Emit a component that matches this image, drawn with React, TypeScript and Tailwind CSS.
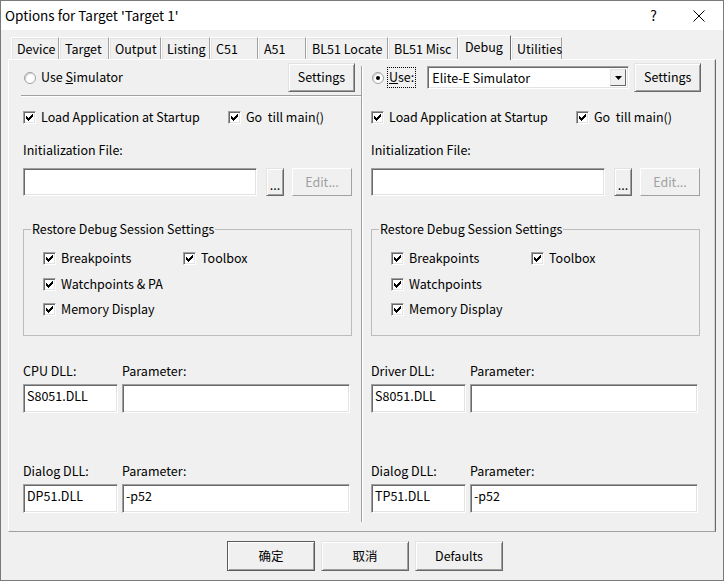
import React from "react";

function Btn({
  children,
  className = "",
  disabled = false,
  strong = false,
}: {
  children: React.ReactNode;
  className?: string;
  disabled?: boolean;
  strong?: boolean;
}) {
  const look = disabled
    ? "border-t-white border-l-white border-r-[#a0a0a0] border-b-[#a0a0a0] text-[#a0a0a0]"
    : strong
    ? "border-[#5a5a5a] shadow-[inset_1px_1px_0_#fff,inset_-1px_-1px_0_#a0a0a0]"
    : "border-t-[#e3e3e3] border-l-[#e3e3e3] border-r-[#696969] border-b-[#696969] shadow-[inset_1px_1px_0_#fff,inset_-1px_-1px_0_#a0a0a0]";
  return (
    <div className={`flex shrink-0 items-center justify-center border bg-[#f0f0f0] ${look} ${className}`}>
      {children}
    </div>
  );
}

function Field({ value = "", className = "" }: { value?: string; className?: string }) {
  return (
    <div
      className={`shrink-0 border border-t-[#a0a0a0] border-l-[#a0a0a0] border-r-white border-b-white bg-white pl-[3px] pt-[2px] leading-[18px] shadow-[inset_1px_1px_0_#696969,inset_-1px_-1px_0_#e3e3e3] ${className}`}
    >
      {value}
    </div>
  );
}

function Check() {
  return (
    <span className="flex h-[13px] w-[13px] shrink-0 items-center justify-center border border-t-[#a0a0a0] border-l-[#a0a0a0] border-r-white border-b-white bg-white shadow-[inset_1px_1px_0_#696969,inset_-1px_-1px_0_#e3e3e3]">
      <svg width="7" height="7" viewBox="0 0 7 7" shapeRendering="crispEdges">
        <path d="M0 2h1v1h1v1h1V3h1V2h1V1h1V0h1v3H6v1H5v1H4v1H3v1H2V6H1V5H0z" fill="#000" />
      </svg>
    </span>
  );
}

function CheckItem({ label, className = "" }: { label: string; className?: string }) {
  return (
    <div className={`flex items-center ${className}`}>
      <Check />
      <span className="ml-[5px] whitespace-pre">{label}</span>
    </div>
  );
}

function Radio({ on = false }: { on?: boolean }) {
  return (
    <span className="flex h-[12px] w-[12px] shrink-0 items-center justify-center rounded-full border border-[#a0a0a0] bg-white shadow-[inset_1px_1px_0_#d0d0d0]">
      {on && <span className="h-[4px] w-[4px] rounded-full bg-black" />}
    </span>
  );
}

function DebugColumn({
  top,
  line,
  dllLabel,
  dll,
  dialogDll,
  watch,
  className = "",
}: {
  top: React.ReactNode;
  line: boolean;
  dllLabel: string;
  dll: string;
  dialogDll: string;
  watch: string;
  className?: string;
}) {
  return (
    <div className={`flex w-[352px] shrink-0 flex-col ${className}`}>
      <div className="mt-[3px] flex h-[29px] items-center">{top}</div>
      <div
        className={`mt-[3px] -ml-[2px] h-[2px] border-t ${line ? "border-t-[#a0a0a0] border-b border-b-white" : "border-transparent"}`}
      />
      <div className="mt-[10px] flex h-[20px] items-center">
        <CheckItem label="Load Application at Startup" className="w-[205px]" />
        <CheckItem label="Go  till main()" />
      </div>
      <div className="mt-[14px] h-[18px] leading-[18px]">Initialization File:</div>
      <div className="mt-[9px] flex h-[28px]">
        <Field className="w-[234px]" />
        <Btn className="ml-[9px] w-[18px] items-end pb-[4px] leading-none">...</Btn>
        <Btn disabled className="ml-[8px] w-[60px]">
          Edit...
        </Btn>
      </div>
      <fieldset className="mt-[24px] h-[116px] w-[329px] border border-[#bcbcbc] px-0">
        <legend className="ml-[7px] px-[1px] leading-[18px]">Restore Debug Session Settings</legend>
        <div className="mt-[10px] flex flex-col gap-[6px] pl-[19px]">
          <div className="flex h-[20px] items-center">
            <CheckItem label="Breakpoints" className="w-[140px]" />
            <CheckItem label="Toolbox" />
          </div>
          <CheckItem label={watch} className="h-[20px]" />
          <CheckItem label="Memory Display" className="-mt-[1px] h-[20px]" />
        </div>
      </fieldset>
      <div className="mt-[26px] flex h-[18px] leading-[18px]">
        <span className="w-[99px]">{dllLabel}</span>
        <span>Parameter:</span>
      </div>
      <div className="mt-[4px] flex h-[29px] gap-[4px]">
        <Field value={dll} className="w-[95px]" />
        <Field className="w-[228px]" />
      </div>
      <div className="mt-[49px] flex h-[18px] leading-[18px]">
        <span className="w-[99px]">Dialog DLL:</span>
        <span>Parameter:</span>
      </div>
      <div className="mt-[4px] flex h-[29px] gap-[4px]">
        <Field value={dialogDll} className="w-[95px]" />
        <Field value="-p52" className="w-[228px]" />
      </div>
    </div>
  );
}

const tabs: { name: string; w: string }[] = [
  { name: "Device", w: "w-[48px]" },
  { name: "Target", w: "w-[50px]" },
  { name: "Output", w: "w-[52px]" },
  { name: "Listing", w: "w-[49px]" },
  { name: "C51", w: "w-[48px]" },
  { name: "A51", w: "w-[48px]" },
  { name: "BL51 Locate", w: "w-[82px]" },
  { name: "BL51 Misc", w: "w-[70px]" },
  { name: "Debug", w: "w-[53px]" },
  { name: "Utilities", w: "w-[51px]" },
];

export default function App() {
  return (
    <div className="flex h-[581px] w-[724px] flex-col border border-[#7a7a7a] bg-[#f0f0f0] font-['Noto_Sans_CJK_SC','Noto_Sans',sans-serif] text-[12.5px] text-black">
      {/* title bar */}
      <div className="flex h-[29px] shrink-0 items-center bg-white pl-[4px]">
        <span className="text-[13.5px]">Options for Target 'Target 1'</span>
        <span className="ml-auto mr-[36px] text-[14px]">?</span>
        <svg width="12" height="12" viewBox="0 0 12 12" className="mr-[18px]">
          <path d="M0.5 0.5L11.5 11.5M11.5 0.5L0.5 11.5" stroke="#000" strokeWidth="1" />
        </svg>
      </div>

      {/* tabs */}
      <div className="mt-[5px] flex h-[24px] shrink-0 pl-[10px]">
        {tabs.map((t) =>
          t.name === "Debug" ? (
            <div
              key={t.name}
              className={`relative z-10 -mb-px h-[25px] border-t border-l border-r border-t-white border-l-white border-r-[#696969] bg-[#f0f0f0] pl-[6px] pt-[1px] leading-[20px] ${t.w}`}
            >
              {t.name}
            </div>
          ) : (
            <div
              key={t.name}
              className={`mt-[2px] h-[22px] border-t border-l border-r border-t-white border-l-white border-r-[#a0a0a0] shadow-[inset_1px_1px_0_#e3e3e3] pl-[5px] pt-[1px] leading-[20px] ${t.w}`}
            >
              {t.name}
            </div>
          )
        )}
      </div>

      {/* tab page */}
      <div className="ml-[7px] flex h-[473px] w-[708px] shrink-0 border border-t-white border-l-white border-r-[#696969] border-b-[#a0a0a0] shadow-[inset_-1px_0_0_#d4d4d4]">
        <DebugColumn
          className="pl-[14px]"
          line
          top={
            <>
              <span className="ml-[1px]">
                <Radio />
              </span>
              <span className="ml-[5px]">
                Use <u>S</u>imulator
              </span>
              <Btn className="ml-auto mr-[6px] h-[29px] w-[67px]">Settings</Btn>
            </>
          }
          dllLabel="CPU DLL:"
          dll="S8051.DLL"
          dialogDll="DP51.DLL"
          watch="Watchpoints & PA"
        />
        <div className="mt-[6px] mb-[9px] w-[2px] shrink-0 border-l border-l-[#a0a0a0] border-r border-r-white" />
        <DebugColumn
          className="pl-[8px]"
          line={false}
          top={
            <>
              <span className="ml-[1px]">
                <Radio on />
              </span>
              <span className="ml-[3px] flex h-[21px] items-center border border-dotted border-black px-[1px] leading-none">
                <u>U</u>se:
              </span>
              <div className="ml-[11px] flex h-[23px] w-[202px] border border-t-[#a0a0a0] border-l-[#a0a0a0] border-r-white border-b-white bg-white shadow-[inset_1px_1px_0_#696969,inset_-1px_-1px_0_#e3e3e3]">
                <span className="flex-1 pl-[4px] pt-[1px] leading-[19px]">Elite-E Simulator</span>
                <div className="my-[2px] mr-[2px] flex w-[16px] items-center justify-center border border-t-[#e3e3e3] border-l-[#e3e3e3] border-r-[#696969] border-b-[#696969] bg-[#f0f0f0]">
                  <svg width="7" height="4" viewBox="0 0 7 4">
                    <path d="M0 0h7L3.5 4z" fill="#000" />
                  </svg>
                </div>
              </div>
              <Btn className="ml-[5px] h-[29px] w-[67px]">Settings</Btn>
            </>
          }
          dllLabel="Driver DLL:"
          dll="S8051.DLL"
          dialogDll="TP51.DLL"
          watch="Watchpoints"
        />
      </div>

      {/* footer buttons */}
      <div className="mt-[9px] flex gap-[6px] pl-[226px]">
        <Btn strong className="h-[30px] w-[88px]">
          确定
        </Btn>
        <Btn className="h-[30px] w-[88px]">取消</Btn>
        <Btn className="h-[30px] w-[88px]">Defaults</Btn>
      </div>
    </div>
  );
}
